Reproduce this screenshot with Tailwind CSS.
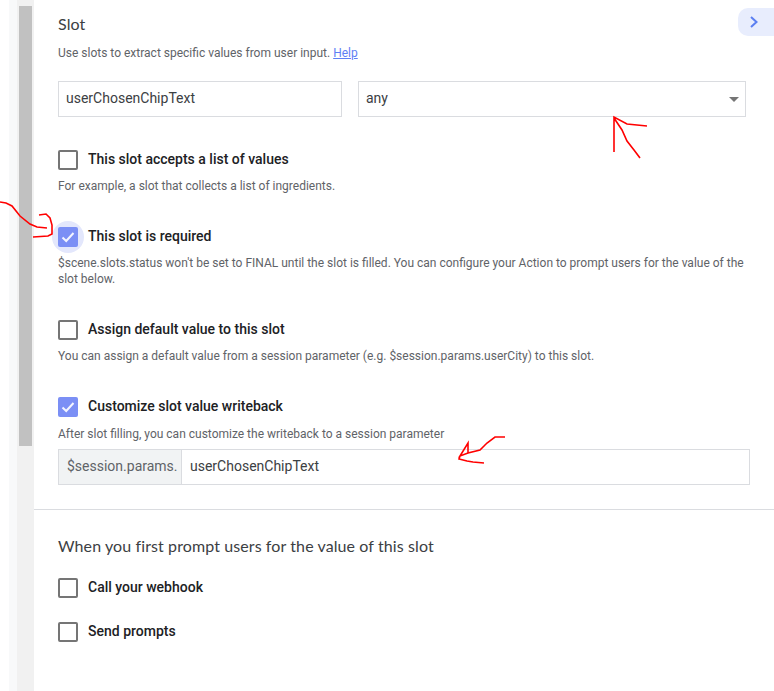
<!DOCTYPE html>
<html lang="en">
<head>
    <meta charset="UTF-8">
    <title>Slot</title>
    <script src="https://cdn.jsdelivr.net/npm/@tailwindcss/browser@4"></script>
</head>
<body class="bg-white font-['Roboto',sans-serif] text-[#202124]">
<div class="relative flex h-[691px] w-[774px] overflow-hidden">

    <!-- scrollbar -->
    <div class="ml-[9px] w-[8px] bg-[#f8f9fa]"></div>
    <div class="h-full w-[17px] bg-[#f1f1f1] px-[2px] pt-[6px]">
        <div class="h-[440px] w-[13px] bg-[#c1c1c1]"></div>
    </div>

    <div class="relative flex-1">
        <!-- slot section -->
        <div class="pl-[24px] pt-[14px]">
            <h2 class="font-['Lato',sans-serif] text-[16px] leading-[20px] tracking-[0.1px] text-[#3c4043]">Slot</h2>
            <p class="mt-[11px] text-[12px] leading-[16px] text-[#5f6368]">Use slots to extract specific values from user input. <a href="#" class="text-[#5f7ff5] underline">Help</a></p>

            <div class="mt-[20px] flex gap-[16px] text-[#3c4043]">
                <div class="flex h-[36px] w-[284px] items-center border border-[#dadce0] pb-[2px] pl-[7px] text-[14px]">userChosenChipText</div>
                <div class="flex h-[36px] w-[388px] items-center justify-between border border-[#dadce0] pl-[7px] pr-[6px] text-[14px]">
                    <span class="mb-[2px]">any</span>
                    <span class="h-0 w-0 border-x-[5px] border-t-[5px] border-x-transparent border-t-[#757575]"></span>
                </div>
            </div>

            <div class="mt-[33px] flex h-[20px] items-center gap-[10px]">
                <span class="h-[20px] w-[20px] rounded-[2px] border-2 border-[#757575]"></span>
                <span class="mb-[2px] text-[14px] font-medium">This slot accepts a list of values</span>
            </div>
            <p class="mt-[8px] text-[12px] leading-[16px] text-[#5f6368]">For example, a slot that collects a list of ingredients.</p>

            <div class="relative mt-[33px] flex h-[20px] items-center gap-[10px]">
                <span class="absolute left-[-6px] top-[-6px] h-[32px] w-[32px] rounded-full bg-[#e3e7fc]"></span>
                <span class="relative flex h-[20px] w-[20px] items-center justify-center rounded-[2px] bg-[#7b8ff5]">
                    <svg width="14" height="14" viewBox="0 0 14 14" fill="none" stroke="#f3f5ff" stroke-width="2"><path d="M1.5 7.5l3.7 3.5 7.3-8"/></svg>
                </span>
                <span class="relative mb-[2px] text-[14px] font-medium">This slot is required</span>
            </div>
            <p class="mt-[8px] w-[696px] text-[12px] leading-[16px] text-[#5f6368]">$scene.slots.status won't be set to FINAL until the slot is filled. You can configure your Action to prompt users for the value of the slot below.</p>

            <div class="mt-[33px] flex h-[20px] items-center gap-[10px]">
                <span class="h-[20px] w-[20px] rounded-[2px] border-2 border-[#757575]"></span>
                <span class="mb-[2px] text-[14px] font-medium">Assign default value to this slot</span>
            </div>
            <p class="mt-[8px] text-[12px] leading-[16px] text-[#5f6368]">You can assign a default value from a session parameter (e.g. $session.params.userCity) to this slot.</p>

            <div class="mt-[33px] flex h-[20px] items-center gap-[10px]">
                <span class="flex h-[20px] w-[20px] items-center justify-center rounded-[2px] bg-[#7b8ff5]">
                    <svg width="14" height="14" viewBox="0 0 14 14" fill="none" stroke="#f3f5ff" stroke-width="2"><path d="M1.5 7.5l3.7 3.5 7.3-8"/></svg>
                </span>
                <span class="mb-[2px] text-[14px] font-medium">Customize slot value writeback</span>
            </div>
            <p class="mt-[9px] text-[12px] leading-[16px] text-[#5f6368]">After slot filling, you can customize the writeback to a session parameter</p>

            <div class="mt-[7px] flex h-[36px] w-[692px] border border-[#dadce0] text-[14px] text-[#3c4043]">
                <div class="flex w-[123px] items-center border-r border-[#dadce0] bg-[#f1f3f4] pb-[2px] pl-[8px] text-[#5f6368]">$session.params.</div>
                <div class="flex flex-1 items-center pb-[2px] pl-[8px]">userChosenChipText</div>
            </div>
        </div>

        <div class="mt-[24px] border-t border-[#dadce0]"></div>

        <!-- first prompt section -->
        <div class="pl-[24px] pt-[26px]">
            <h2 class="font-['Lato',sans-serif] text-[16px] leading-[20px] tracking-[0.1px] text-[#3c4043]">When you first prompt users for the value of this slot</h2>
            <div class="mt-[22px] flex h-[20px] items-center gap-[10px]">
                <span class="h-[20px] w-[20px] rounded-[2px] border-2 border-[#757575]"></span>
                <span class="mb-[2px] text-[14px] font-medium">Call your webhook</span>
            </div>
            <div class="mt-[24px] flex h-[20px] items-center gap-[10px]">
                <span class="h-[20px] w-[20px] rounded-[2px] border-2 border-[#757575]"></span>
                <span class="mb-[2px] text-[14px] font-medium">Send prompts</span>
            </div>
        </div>
    </div>

    <!-- collapse button -->
    <div class="absolute right-0 top-[8px] flex h-[28px] w-[36px] items-center rounded-l-[10px] bg-[#e8edfd] pl-[11px]">
        <svg width="10" height="14" viewBox="0 0 10 14" fill="none" stroke="#5b7ff1" stroke-width="2"><path d="M2 2l5.5 5-5.5 5"/></svg>
    </div>

    <!-- red pen annotations -->
    <svg class="absolute left-0 top-0" width="774" height="691" fill="none" stroke="#ff0000" stroke-width="1.6">
        <path d="M0 202l6 1 6 3 8 10 10 8 7 3 10 1"/>
        <path d="M39 215l7-1 4 4 2 7v9l-4 2-15 1"/>
        <path d="M614 152v-35l13 7 20 2M614 118l8 12 5 11 7 9 6 8"/>
        <path d="M505 437h-10l-8 6-7 7-12 3-8 3 8-13v10M460 456l-1 3 8 2 6 1 11 1"/>
    </svg>
</div>
</body>
</html>
